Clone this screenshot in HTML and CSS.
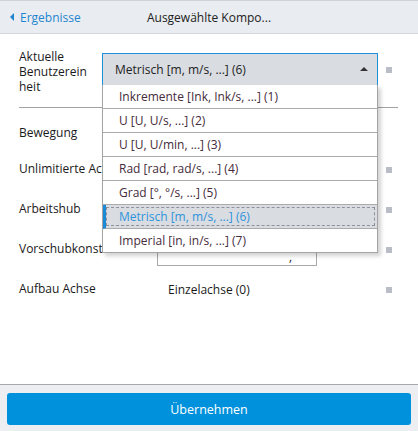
FILE: index.html
```html
<!DOCTYPE html>
<html lang="de">
<head>
<meta charset="utf-8">
<link rel="stylesheet" href="styles.css">
</head>
<body>
<div class="app">
  <header class="topbar">
    <a class="back"><span class="back-arrow"></span>Ergebnisse</a>
    <div class="title">Ausgewählte Kompo...</div>
  </header>

  <main class="content">
    <div class="row row-first">
      <div class="label label-wrap">Aktuelle Benutzereinheit</div>
      <div class="value">
        <div class="select">
          <span>Metrisch [m, m/s, ...] (6)</span>
          <span class="caret"></span>
        </div>
        <ul class="options">
          <li>Inkremente [Ink, Ink/s, ...] (1)</li>
          <li>U [U, U/s, ...] (2)</li>
          <li>U [U, U/min, ...] (3)</li>
          <li>Rad [rad, rad/s, ...] (4)</li>
          <li>Grad [°, °/s, ...] (5)</li>
          <li class="selected"><span class="focus">Metrisch [m, m/s, ...] (6)</span></li>
          <li>Imperial [in, in/s, ...] (7)</li>
        </ul>
      </div>
      <span class="marker"></span>
    </div>

    <div class="divider"></div>

    <div class="row row-section">
      <div class="label">Bewegung</div>
    </div>
    <div class="row">
      <div class="label">Unlimitierte Achse</div>
      <div class="value"></div>
      <span class="marker"></span>
    </div>
    <div class="row">
      <div class="label">Arbeitshub</div>
      <div class="value"></div>
      <span class="marker"></span>
    </div>
    <div class="row">
      <div class="label">Vorschubkonstante</div>
      <div class="value">
        <div class="input"><span class="input-tail">,</span></div>
      </div>
      <span class="marker"></span>
    </div>
    <div class="row">
      <div class="label">Aufbau Achse</div>
      <div class="value"><span class="value-text">Einzelachse (0)</span></div>
      <span class="marker"></span>
    </div>
  </main>

  <footer class="footer">
    <button class="apply">Übernehmen</button>
  </footer>
</div>
</body>
</html>
```

FILE: styles.css
```css
* { box-sizing: border-box; }

html, body {
  margin: 0;
  padding: 0;
  background: #ffffff;
}

body {
  font-family: "Open Sans", "Noto Sans", sans-serif;
  font-size: 12px;
  color: #1a1a1a;
}

.app {
  width: 418px;
  height: 431px;
  display: flex;
  flex-direction: column;
  overflow: hidden;
}

.topbar {
  height: 34px;
  flex: none;
  position: relative;
  display: flex;
  align-items: center;
  background: #e9ecf0;
  border-top: 1px solid #cfd3d8;
  border-bottom: 1px solid #d4d8dd;
}

.back {
  display: flex;
  align-items: center;
  padding-left: 10px;
  color: #1e86cf;
  font-size: 12px;
}

.back-arrow {
  width: 0;
  height: 0;
  border-top: 4px solid transparent;
  border-bottom: 4px solid transparent;
  border-right: 4px solid #1e86cf;
  margin-right: 6px;
}

.title {
  position: absolute;
  left: 0;
  right: 0;
  top: 0;
  bottom: 0;
  display: flex;
  align-items: center;
  justify-content: center;
  color: #222;
  pointer-events: none;
}

.content {
  flex: 1;
  padding: 13px 20px 0 19px;
}

.row {
  display: flex;
  align-items: center;
  height: 40px;
  position: relative;
}

.row-first {
  align-items: flex-start;
  height: 47px;
}

.row-section {
  height: 32px;
  margin-top: 10px;
}

.label {
  width: 83px;
  flex: none;
  white-space: nowrap;
  line-height: 15px;
  margin-top: -3px;
}

.label-wrap {
  white-space: normal;
  overflow-wrap: anywhere;
  width: 71px;
  margin-right: 12px;
  margin-top: 2px;
}

.value {
  flex: 1;
  position: relative;
  align-self: stretch;
  display: flex;
  align-items: center;
}

.row-first .value {
  display: block;
  padding-top: 6px;
  z-index: 5;
}

.marker {
  width: 6px;
  height: 6px;
  background: #b9bec6;
  flex: none;
  margin-left: 8px;
  margin-right: 6px;
}

.row-first .marker {
  margin-top: 20px;
}

.select {
  height: 33px;
  border: 1px solid #1f8fdb;
  background: #d9dce1;
  display: flex;
  align-items: center;
  justify-content: space-between;
  padding: 0 9px 0 12px;
  color: #222;
}

.caret {
  width: 0;
  height: 0;
  border-left: 4px solid transparent;
  border-right: 4px solid transparent;
  border-bottom: 4px solid #333;
  margin-top: -1px;
}

.options {
  position: absolute;
  top: 38px;
  left: 0;
  right: 0;
  margin: 0;
  padding: 0;
  list-style: none;
  background: #ffffff;
  border: 1px solid #a4a4a4;
  border-top: none;
  box-shadow: 3px 3px 4px rgba(0, 0, 0, 0.18);
}

.options li {
  height: 24px;
  border-bottom: 1px solid #ababab;
  display: flex;
  align-items: center;
  padding-left: 16px;
  color: #452b3b;
}

.options li:last-child {
  border-bottom: none;
  height: 23px;
}

.options li.selected {
  background: #d9dce1;
  padding: 2px 2px 2px 0;
  border-left: 3px solid #1a8ad6;
}

.options .focus {
  flex: 1;
  align-self: stretch;
  display: flex;
  align-items: center;
  padding-left: 12px;
  border: 1px dashed #8e9298;
  color: #2f93dc;
}

.divider {
  height: 1px;
  background: #a3a3a3;
  margin-top: 13px;
}

.input {
  position: absolute;
  left: 55px;
  width: 160px;
  top: 6px;
  bottom: 4px;
  border: 1px solid #a9a9a9;
}

.input-tail {
  position: absolute;
  right: 24px;
  bottom: 0;
  color: #222;
}

.value-text {
  padding-left: 66px;
  margin-top: -2px;
  color: #1a1a1a;
}

.footer {
  flex: none;
  height: 47px;
  background: #eceef2;
  border-top: 1px solid #a8a8a8;
  padding: 8px 7px 6px 7px;
}

.apply {
  width: 100%;
  height: 32px;
  border: none;
  border-radius: 3px;
  background: #0091dc;
  color: #ffffff;
  font-family: "Open Sans", "Noto Sans", sans-serif;
  font-size: 12.5px;
}
```
